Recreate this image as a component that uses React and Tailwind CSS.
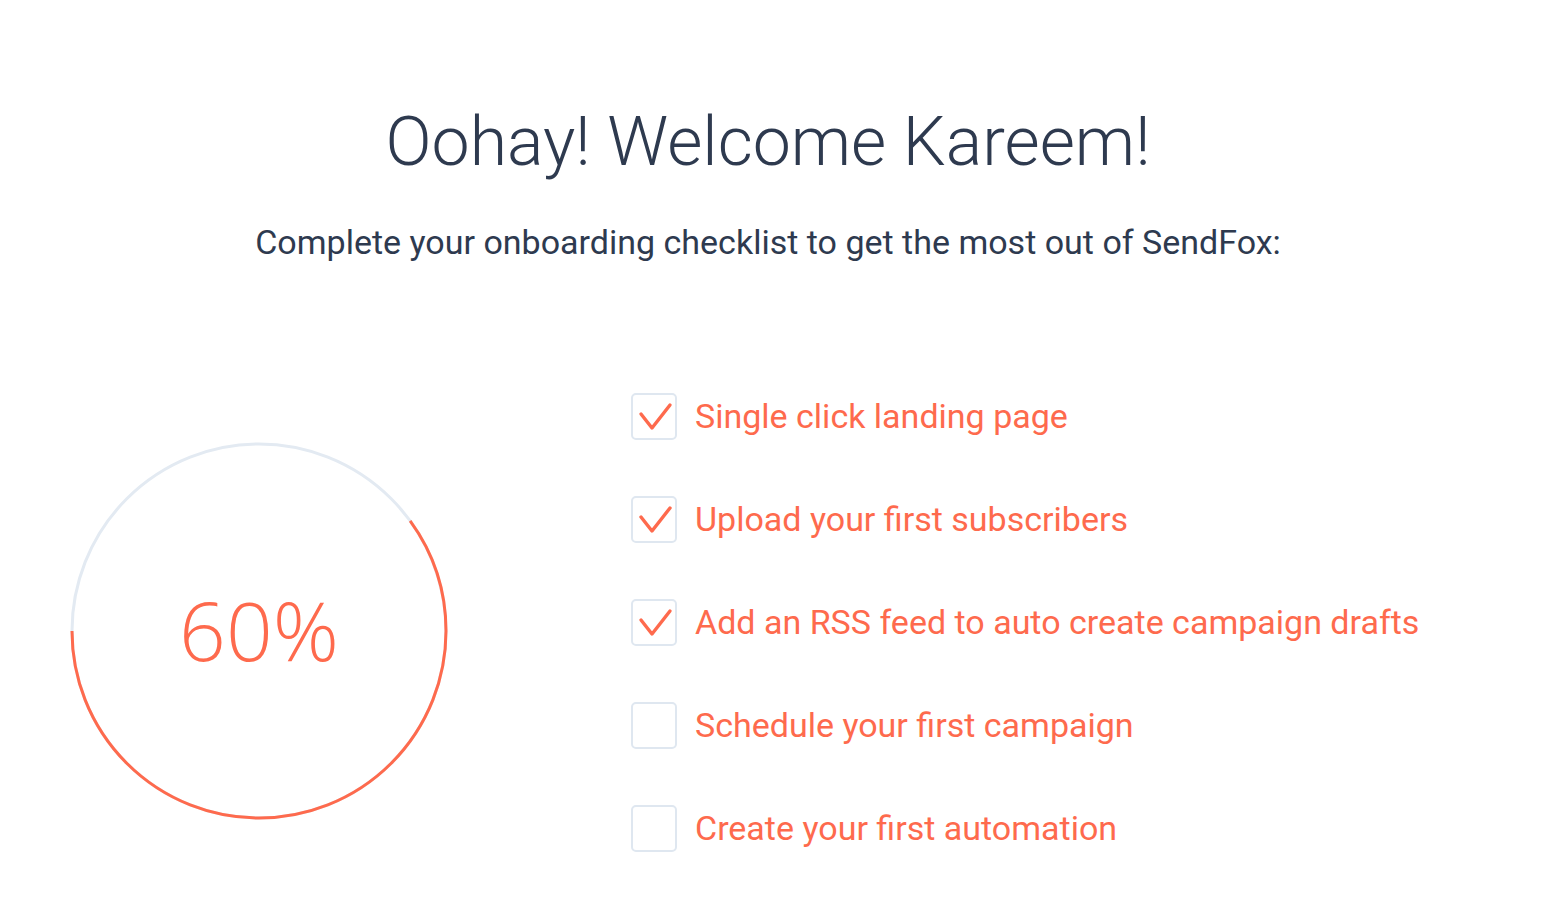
const TAREAS = [
  { texto: 'Single click landing page', hecho: true },
  { texto: 'Upload your first subscribers', hecho: true },
  { texto: 'Add an RSS feed to auto create campaign drafts', hecho: true },
  { texto: 'Schedule your first campaign', hecho: false },
  { texto: 'Create your first automation', hecho: false },
];

function Progreso({ porcentaje }) {
  const r = 187;
  const c = 2 * Math.PI * r;
  const largo = (c * porcentaje) / 100;
  return (
    <div className="relative w-[380px] h-[380px] shrink-0">
      <svg width="380" height="380" viewBox="0 0 380 380" className="block">
        <circle cx="190" cy="190" r={r} fill="none" stroke="#e3eaf2" strokeWidth="3" />
        {/* starts at 9 o'clock and runs through the bottom */}
        <circle
          cx="190"
          cy="190"
          r={r}
          fill="none"
          stroke="#fe6a4d"
          strokeWidth="3"
          strokeDasharray={`${largo} ${c}`}
          transform="rotate(180 190 190) scale(1 -1) translate(0 -380)"
        />
      </svg>
      <div className="absolute inset-0 flex items-center justify-center pb-[4px]">
        <span className="text-[82px] font-light leading-none text-[#fe6a4d] font-['Open_Sans',sans-serif]">
          {porcentaje}%
        </span>
      </div>
    </div>
  );
}

function Casilla({ hecho }) {
  return (
    <div className="relative w-[46px] h-[47px] rounded-[5px] border-2 border-[#dfe7f0] shrink-0">
      {hecho && (
        <svg viewBox="0 0 46 47" className="absolute -inset-[2px] w-[46px] h-[47px]">
          <path
            d="M10 21 L21 35 L39 12"
            fill="none"
            stroke="#fe6a4d"
            strokeWidth="3.4"
            strokeLinecap="round"
            strokeLinejoin="round"
          />
        </svg>
      )}
    </div>
  );
}

export default function App() {
  return (
    <div className="w-[1536px] min-h-[902px] bg-white font-['Roboto',sans-serif]">
      <h1 className="pt-[100px] text-center text-[68px] font-light leading-[84px] text-[#2e3a4f]">
        Oohay! Welcome Kareem!
      </h1>
      <p className="mt-[38px] text-center text-[34px] leading-[40px] text-[#2e3a4f]">
        Complete your onboarding checklist to get the most out of SendFox:
      </p>
      <div className="flex mt-[131px]">
        <div className="pl-[69px] pt-[48px]">
          <Progreso porcentaje={60} />
        </div>
        <ul className="ml-[182px] flex flex-col gap-[56px]">
          {TAREAS.map((t) => (
            <li key={t.texto} className="flex items-center gap-[18px]">
              <Casilla hecho={t.hecho} />
              <span className="text-[34px] leading-[47px] text-[#fe6a4d]">{t.texto}</span>
            </li>
          ))}
        </ul>
      </div>
    </div>
  );
}
